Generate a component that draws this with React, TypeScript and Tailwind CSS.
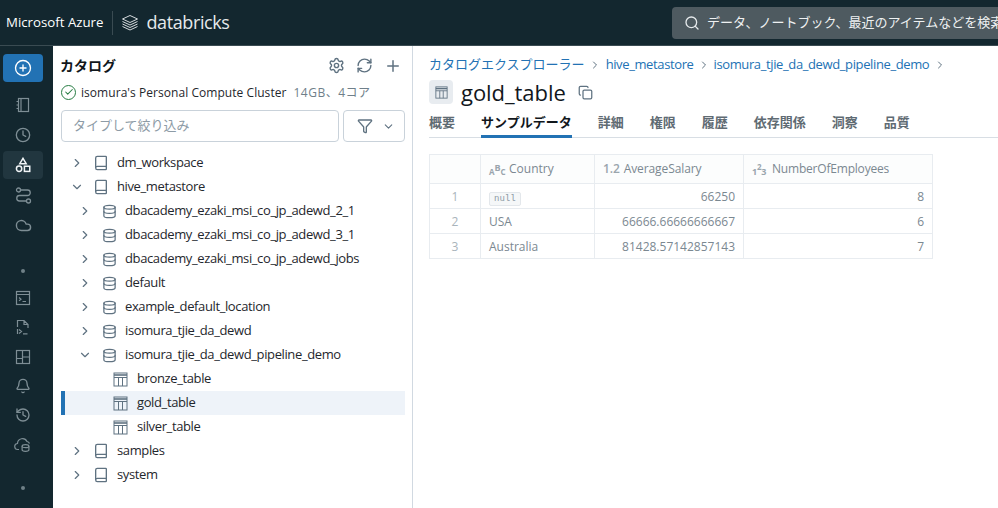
import {
  Bell,
  Book,
  Check,
  ChevronDown,
  ChevronRight,
  CirclePlus,
  Clock,
  Cloud,
  Copy,
  Database,
  Filter,
  History,
  Plus,
  RefreshCw,
  Search,
  Settings,
} from "lucide-react";
import type { ReactNode } from "react";

const FONT = "font-['Open_Sans','Noto_Sans_CJK_JP',sans-serif]";

const Dot = () => <div className="w-[4px] h-[4px] rounded-full bg-[#6f8087]" />;

const NotebookIcon = () => (
  <svg width="16" height="16" viewBox="0 0 16 16" fill="none" stroke="#7e8e95" strokeWidth="1.2">
    <rect x="3.5" y="1.5" width="10" height="13" />
    <path d="M6 1.5V14.5M1.5 4.5H3.5M1.5 8H3.5M1.5 11.5H3.5" />
  </svg>
);

const ShapesIcon = () => (
  <svg width="16" height="16" viewBox="0 0 18 18" fill="none" stroke="#f1f5f7" strokeWidth="1.7">
    <path d="M9 1.5 L12.6 7.5 H5.4 Z" />
    <circle cx="4.6" cy="13.2" r="3" />
    <rect x="10.6" y="10.4" width="6" height="5.8" />
  </svg>
);

const WorkflowIcon = () => (
  <svg width="17" height="17" viewBox="0 0 17 17" fill="none" stroke="#7e8e95" strokeWidth="1.3">
    <circle cx="3.5" cy="3" r="2" />
    <circle cx="13.5" cy="14" r="2" />
    <path d="M5.5 3H12.5a2.6 2.6 0 0 1 0 5.5H4.5a2.7 2.7 0 0 0 0 5.5H11.5" />
  </svg>
);

const TerminalIcon = () => (
  <svg width="16" height="16" viewBox="0 0 16 16" fill="none" stroke="#7e8e95" strokeWidth="1.2">
    <rect x="1.5" y="1.5" width="13" height="13" />
    <path d="M1.5 4.5H14.5M4 7.5l2 1.7-2 1.7M7.5 11.5H11" />
  </svg>
);

const FileTerminalIcon = () => (
  <svg width="16" height="16" viewBox="0 0 16 16" fill="none" stroke="#7e8e95" strokeWidth="1.2">
    <path d="M2.5 8V1.5H9L13 5.5V9M9 1.5V5.5H13M2.5 10v5M4 10.5l2.5 2-2.5 2M8 14.8h4.5" />
  </svg>
);

const DashboardIcon = () => (
  <svg width="16" height="16" viewBox="0 0 16 16" fill="none" stroke="#7e8e95" strokeWidth="1.2">
    <rect x="1.5" y="1.5" width="13" height="13" />
    <path d="M7.5 1.5V14.5M7.5 8H14.5M1.5 9.5H7.5" />
  </svg>
);

const CloudDbIcon = () => (
  <svg width="18" height="16" viewBox="0 0 18 16" fill="none" stroke="#7e8e95" strokeWidth="1.2">
    <path d="M5 13.5H4a3 3 0 0 1-.5-6A5 5 0 0 1 13 5.5a3.4 3.4 0 0 1 2.5 2" />
    <ellipse cx="11.5" cy="10.2" rx="3.4" ry="1.5" />
    <path d="M8.1 10.2v3.6c0 .9 1.5 1.5 3.4 1.5s3.4-.6 3.4-1.5v-3.6" />
  </svg>
);

const TableIcon = ({ size = 15 }: { size?: number }) => (
  <svg width={size} height={size} viewBox="0 0 15 15" fill="none" stroke="#5f7281" strokeWidth="1" className="shrink-0">
    <rect x="1" y="1" width="13" height="13" />
    <path d="M1 3H14" strokeWidth="1.6" />
    <path d="M1 5.5H14M5.5 5.5V14M9.5 5.5V14" />
  </svg>
);

const SideSlot = ({ children, active, tight }: { children: ReactNode; active?: boolean; tight?: boolean }) => (
  <div className={`w-[40px] h-[28px] flex items-center justify-center rounded-[4px] ${tight ? "mt-[1.2px]" : "mt-[2px]"} ${active ? "bg-[#21363f]" : ""}`}>
    {children}
  </div>
);

const Sidebar = () => (
  <div className="w-[53px] shrink-0 bg-[#13272f] flex flex-col items-start pl-[3px] pt-[8px]">
    <div className="w-[40px] h-[28px] rounded-[4px] bg-[#2272b4] flex items-center justify-center">
      <CirclePlus size={18} color="#fff" strokeWidth={1.8} />
    </div>
    <div className="mt-[7px] flex flex-col">
      <SideSlot><NotebookIcon /></SideSlot>
      <SideSlot><Clock size={16} color="#7e8e95" /></SideSlot>
      <SideSlot active><ShapesIcon /></SideSlot>
      <SideSlot><WorkflowIcon /></SideSlot>
      <SideSlot><Cloud size={17} color="#7e8e95" /></SideSlot>
    </div>
    <div className="mt-[30px] mb-[10px] ml-[18px]"><Dot /></div>
    <div className="flex flex-col">
      <SideSlot tight><TerminalIcon /></SideSlot>
      <SideSlot tight><FileTerminalIcon /></SideSlot>
      <SideSlot tight><DashboardIcon /></SideSlot>
      <SideSlot tight><Bell size={16} color="#7e8e95" /></SideSlot>
      <SideSlot tight><History size={16} color="#7e8e95" /></SideSlot>
      <SideSlot tight><CloudDbIcon /></SideSlot>
    </div>
    <div className="mt-[28px] ml-[18px]"><Dot /></div>
  </div>
);

type Row = { name: string; kind: "book" | "db" | "table"; open?: boolean; selected?: boolean };

const rows: Row[] = [
  { name: "dm_workspace", kind: "book" },
  { name: "hive_metastore", kind: "book", open: true },
  { name: "dbacademy_ezaki_msi_co_jp_adewd_2_1", kind: "db" },
  { name: "dbacademy_ezaki_msi_co_jp_adewd_3_1", kind: "db" },
  { name: "dbacademy_ezaki_msi_co_jp_adewd_jobs", kind: "db" },
  { name: "default", kind: "db" },
  { name: "example_default_location", kind: "db" },
  { name: "isomura_tjie_da_dewd", kind: "db" },
  { name: "isomura_tjie_da_dewd_pipeline_demo", kind: "db", open: true },
  { name: "bronze_table", kind: "table" },
  { name: "gold_table", kind: "table", selected: true },
  { name: "silver_table", kind: "table" },
  { name: "samples", kind: "book" },
  { name: "system", kind: "book" },
];

const TreeRow = ({ row }: { row: Row }) => {
  const Chevron = row.open ? ChevronDown : ChevronRight;
  return (
    <div className={`h-[24px] ml-[8px] mr-[7px] flex items-center text-[13px] tracking-[-0.38px] text-[#1f272d] ${row.selected ? "bg-[#eef3f9] border-l-[4px] border-[#2272b4]" : "pl-[4px]"}`}>
      {row.kind === "book" && (
        <>
          <Chevron size={14} color="#5f7281" className="ml-[5px] shrink-0" />
          <Book size={16} color="#5f7281" className="ml-[9px] shrink-0" />
          <span className="ml-[8px]">{row.name}</span>
        </>
      )}
      {row.kind === "db" && (
        <>
          <Chevron size={14} color="#5f7281" className="ml-[13px] shrink-0" />
          <Database size={15} color="#5f7281" className="ml-[10px] shrink-0" />
          <span className="ml-[8px]">{row.name}</span>
        </>
      )}
      {row.kind === "table" && (
        <>
          <div className="ml-[48px]"><TableIcon /></div>
          <span className="ml-[9px]">{row.name}</span>
        </>
      )}
    </div>
  );
};

const CatalogPanel = () => (
  <div className="w-[360px] shrink-0 border-r border-[#d1d9e1] bg-white">
    <div className="h-[36px] flex items-center pl-[7px] pr-[10px] pt-[3px]">
      <span className="text-[14px] font-bold text-[#11171c]">カタログ</span>
      <div className="ml-auto flex items-center gap-[11px]">
        <Settings size={17} color="#5f7281" />
        <RefreshCw size={17} color="#5f7281" />
        <Plus size={18} color="#5f7281" />
      </div>
    </div>
    <div className="h-[18px] mt-[1px] flex items-center pl-[8px] text-[12px] text-[#1f272d]">
      <span className="w-[15px] h-[15px] rounded-full border-[1.5px] border-[#277c43] flex items-center justify-center">
        <Check size={10} color="#277c43" strokeWidth={2.5} />
      </span>
      <span className="ml-[5px] mt-[2px] tracking-[0.05px]">isomura's Personal Compute Cluster</span>
      <span className="ml-[7px] mt-[2px] text-[#6f7f8a] text-[12px] tracking-[0.5px]">14GB、4コア</span>
    </div>
    <div className="mt-[9px] ml-[8px] flex gap-[4px]">
      <div className="w-[278px] h-[32px] rounded-[4px] border border-[#c9d2da] flex items-center pl-[11px] text-[13px] text-[#8d9ba6]">
        タイプして絞り込み
      </div>
      <div className="w-[62px] h-[32px] rounded-[4px] border border-[#c9d2da] flex items-center pl-[13px] gap-[9px]">
        <Filter size={16} color="#5f7281" />
        <ChevronDown size={13} color="#5f7281" />
      </div>
    </div>
    <div className="mt-[9px]">
      {rows.map((r) => <TreeRow key={r.name} row={r} />)}
    </div>
  </div>
);

const tabs = ["概要", "サンプルデータ", "詳細", "権限", "履歴", "依存関係", "洞察", "品質"];

const cell = "border border-[#e8ecf0]";
const body = "border border-[#e8ecf0] pl-[8px] pt-[2px]";
const num = "border border-[#e8ecf0] text-right pr-[8px] pt-[2px]";
const idx = "border border-[#e8ecf0] text-center text-[#a9b4bb] pt-[2px]";

const SampleTable = () => (
  <table className="border-collapse text-[12px] text-[#7b8891] w-[504px] table-fixed">
    <thead>
      <tr className="h-[29px] bg-[#fcfdfd]">
        <th className={`w-[51px] ${cell}`} />
        <th className={`w-[114px] ${cell} font-normal text-left pl-[8px]`}>
          <span className="inline-flex items-center mr-[4px] w-[16px] h-[14px] align-middle text-[#9aa5ad] font-bold leading-none">
            <span className="text-[8px] mt-[5px]">A</span>
            <span className="text-[9px] -mt-[4px]">B</span>
            <span className="text-[8px] mt-[5px]">C</span>
          </span>
          Country
        </th>
        <th className={`w-[149px] ${cell} font-normal text-left pl-[8px] tracking-[-0.1px]`}>
          <span className="mr-[4px] font-semibold text-[#9aa5ad]">1.2</span>AverageSalary
        </th>
        <th className={`${cell} font-normal text-left pl-[8px] tracking-[-0.2px]`}>
          <span className="inline-flex items-center mr-[4px] w-[16px] h-[14px] align-middle text-[#9aa5ad] font-bold leading-none">
            <span className="text-[9px] mt-[4px]">1</span>
            <span className="text-[8px] -mt-[5px]">2</span>
            <span className="text-[9px] mt-[4px]">3</span>
          </span>
          NumberOfEmployees
        </th>
      </tr>
    </thead>
    <tbody>
      <tr className="h-[25px]">
        <td className={idx}>1</td>
        <td className={body}>
          <span className="inline-block h-[14px] leading-[13px] px-[4px] rounded-[2px] border border-[#e3e7eb] bg-[#f5f7f8] font-['Liberation_Mono',monospace] text-[9px] text-[#8d9ba6]">null</span>
        </td>
        <td className={num}>66250</td>
        <td className={num}>8</td>
      </tr>
      <tr className="h-[25px]">
        <td className={idx}>2</td>
        <td className={body}>USA</td>
        <td className={num}>66666.66666666667</td>
        <td className={num}>6</td>
      </tr>
      <tr className="h-[25px]">
        <td className={idx}>3</td>
        <td className={body}>Australia</td>
        <td className={num}>81428.57142857143</td>
        <td className={num}>7</td>
      </tr>
    </tbody>
  </table>
);

const DetailPanel = () => (
  <div className="flex-1 min-w-0 bg-white pl-[16px]">
    <div className="h-[20px] mt-[9px] flex items-center text-[13px] text-[#2272b4] whitespace-nowrap">
      <span>カタログエクスプローラー</span>
      <ChevronRight size={12} color="#5f7281" className="mx-[4px]" />
      <span className="ml-[1px] tracking-[-0.38px]">hive_metastore</span>
      <ChevronRight size={12} color="#5f7281" className="mx-[4px]" />
      <span className="tracking-[-0.38px]">isomura_tjie_da_dewd_pipeline_demo</span>
      <ChevronRight size={12} color="#5f7281" className="mx-[5px]" />
    </div>
    <div className="mt-[5px] h-[24px] flex items-center">
      <span className="w-[24px] h-[24px] rounded-[4px] bg-[#e8ecf0] flex items-center justify-center">
        <TableIcon size={13} />
      </span>
      <span className="ml-[8px] text-[22px] font-medium tracking-[-0.05px] text-[#11171c]">gold_table</span>
      <Copy size={15} color="#5f7281" className="ml-[12px]" />
    </div>
    <div className="mt-[7px] h-[27px] flex gap-[26px] border-b border-[#d8dee4] text-[13px] text-[#5f6b73]">
      {tabs.map((t) => (
        <span key={t} className={`h-[27px] pt-[2px] font-semibold ${t === "サンプルデータ" ? "border-b-[3px] border-[#2272b4] text-[#11171c]" : ""}`}>
          {t}
        </span>
      ))}
    </div>
    <div className="mt-[16px]">
      <SampleTable />
    </div>
  </div>
);

const TopBar = () => (
  <div className="h-[46px] shrink-0 bg-[#13272f] border-b border-[#3a4b52] flex items-center">
    <span className="ml-[6px] text-[13.25px] text-white whitespace-nowrap">Microsoft Azure</span>
    <div className="ml-[9px] w-px h-[24px] bg-[#3a4b52]" />
    <svg className="ml-[8px] shrink-0" width="18" height="18" viewBox="0 0 18 18" fill="none" stroke="#d5dadd" strokeWidth="1">
      <path d="M9 1.5 16.5 5 9 8.5 1.5 5Z" />
      <path d="M1.5 7.5 9 11 16.5 7.5" />
      <path d="M1.5 10 9 13.5 16.5 10" />
      <path d="M1.5 12.5 9 16 16.5 12.5" />
    </svg>
    <span className="ml-[7px] text-[18px] font-medium text-[#e6eaec] tracking-[-0.4px]">databricks</span>
    <div className="ml-auto w-[326px] h-[32px] shrink-0 rounded-l-[4px] bg-[#4e5a60] flex items-center pl-[12px] overflow-hidden whitespace-nowrap">
      <Search size={16} color="#e6eaec" className="shrink-0" />
      <span className="ml-[7px] text-[13px] text-[#eef1f2]">データ、ノートブック、最近のアイテムなどを検索...</span>
    </div>
  </div>
);

export default function App() {
  return (
    <div className={`${FONT} w-[998px] h-[508px] flex flex-col overflow-hidden`}>
      <TopBar />
      <div className="flex flex-1 min-h-0">
        <Sidebar />
        <CatalogPanel />
        <DetailPanel />
      </div>
    </div>
  );
}
